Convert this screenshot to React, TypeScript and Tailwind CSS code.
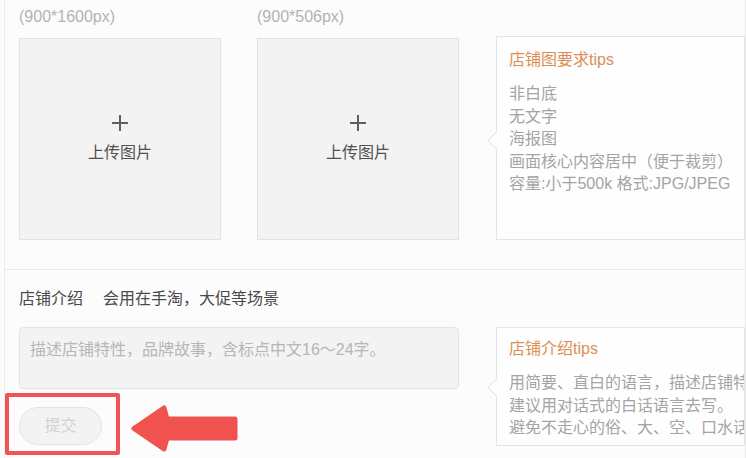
const font = {
  fontFamily: '"Liberation Sans", "Noto Sans CJK SC", sans-serif',
};

function UploadBox({ size }: { size: string }) {
  return (
    <div className="flex w-[202px] shrink-0 flex-col">
      <div className="h-[22px] text-[16px] leading-[22px] text-[#b3b3b3]">{size}</div>
      <div className="mt-[10px] flex h-[202px] flex-col items-center justify-center border border-[#e3e3e3] bg-[#f3f3f4]">
        <svg width="16" height="16" viewBox="0 0 16 16">
          <path d="M8 0v16M0 8h16" stroke="#5f5f5f" strokeWidth="2" />
        </svg>
        <div className="mt-[11px] text-[16px] leading-[22px] text-[#4f4f4f]">上传图片</div>
      </div>
    </div>
  );
}

function Tips({
  title,
  lines,
  arrowTop,
  className,
}: {
  title: string;
  lines: string[];
  arrowTop: string;
  className: string;
}) {
  return (
    <div className={`relative min-w-0 border border-[#e4e4e4] bg-[#fefefe] pl-[12px] ${className}`}>
      <div
        className={`absolute -left-[7px] h-[13px] w-[13px] rotate-45 border-b border-l border-[#e4e4e4] bg-[#fefefe] ${arrowTop}`}
      />
      <div className="relative overflow-hidden">
        <div className="text-[16px] leading-[22px] text-[#dc8e52]">{title}</div>
        <div className="mt-[12px] text-[16px] leading-[22.5px] whitespace-nowrap text-[#a4a4a4]">
          {lines.map((line, i) => (
            <div key={i}>{line}</div>
          ))}
        </div>
      </div>
    </div>
  );
}

export default function App() {
  return (
    <div className="relative h-[458px] w-[746px] overflow-hidden bg-[#fcfcfc]" style={font}>
      <div className="ml-[4px] h-full w-[742px] overflow-hidden border-x border-[#ebebeb]">
        {/* shop pictures */}
        <div className="flex border-b border-[#e9e9e9] pt-[6px] pb-[29px] pl-[14px]">
          <UploadBox size="(900*1600px)" />
          <div className="ml-[36px] shrink-0">
            <UploadBox size="(900*506px)" />
          </div>
          <Tips
            title="店铺图要求tips"
            lines={[
              '非白底',
              '无文字',
              '海报图',
              '画面核心内容居中（便于裁剪）',
              '容量:小于500k 格式:JPG/JPEG',
            ]}
            arrowTop="top-[97px]"
            className="mt-[30px] ml-[37px] h-[204px] flex-1 pt-[12px]"
          />
        </div>

        {/* shop intro */}
        <div className="pt-[18px] pl-[14px]">
          <div className="flex text-[16px] leading-[22px] text-[#4a4a4a]">
            <span>店铺介绍</span>
            <span className="ml-[20px]">会用在手淘，大促等场景</span>
          </div>
          <div className="mt-[17px] flex">
            <div className="flex w-[440px] shrink-0 flex-col">
              <div className="h-[62px] rounded-[4px] border border-[#e3e3e3] bg-[#f3f3f3] px-[10px] pt-[11px] text-[16px] leading-[22px] whitespace-nowrap text-[#b6b6b6]">
                描述店铺特性，品牌故事，含标点中文16～24字。
              </div>
              <button className="mt-[18px] h-[38px] w-[83px] rounded-full border border-[#e3e3e3] bg-[#f3f3f3] text-[16px] text-[#d2d2d2]">
                提交
              </button>
            </div>
            <Tips
              title="店铺介绍tips"
              lines={[
                '用简要、直白的语言，描述店铺特色与卖点',
                '建议用对话式的白话语言去写。',
                '避免不走心的俗、大、空、口水话',
              ]}
              arrowTop="top-[53px]"
              className="ml-[37px] h-[119px] flex-1 pt-[10px]"
            />
          </div>
        </div>
      </div>

      {/* annotation */}
      <div className="absolute top-[393px] left-[5px] h-[62px] w-[115px] rounded-[2px] border-[4px] border-[#ef5552]" />
      <svg className="absolute top-[405px] left-[131px]" width="109" height="47" viewBox="0 0 109 47">
        <path
          d="M3 23.5 L33 3 L36 14 L104 14 L104 33 L36 33 L33 44 Z"
          fill="#f0534f"
          stroke="#f0534f"
          strokeWidth="5"
          strokeLinejoin="round"
        />
      </svg>
    </div>
  );
}
